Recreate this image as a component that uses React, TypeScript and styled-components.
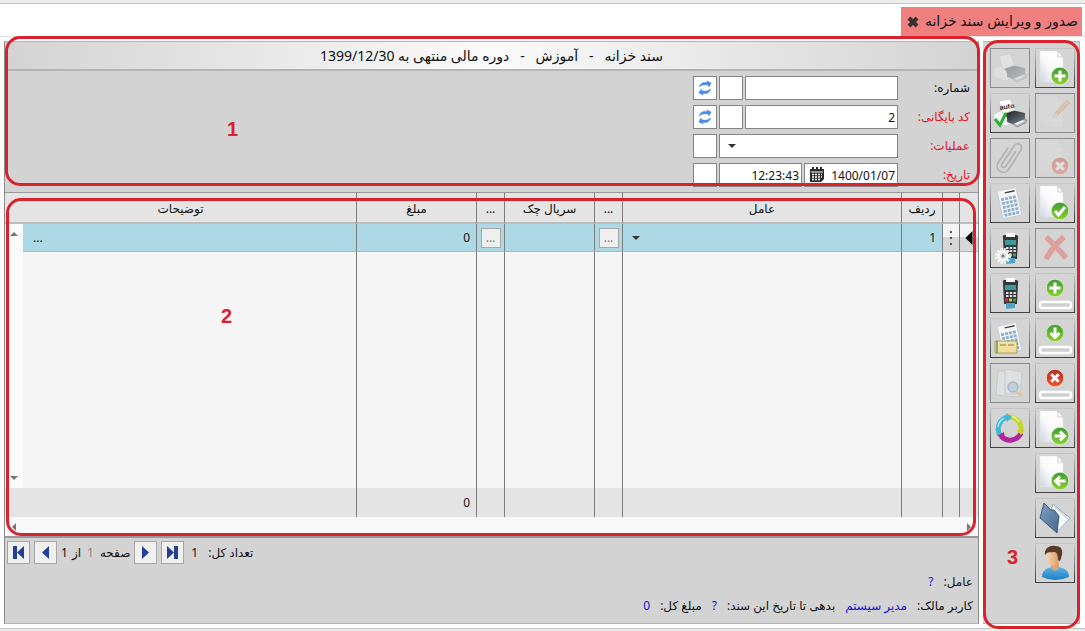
import React from "react";
import styled, { createGlobalStyle, css } from "styled-components";

const Global = createGlobalStyle`
  * { box-sizing: border-box; }
  body {
    margin: 0;
    background: #fff;
    color: #111;
    font: 12px/16px "Noto Sans", "DejaVu Sans", sans-serif;
  }
  button, input { font: inherit; color: inherit; margin: 0; }
`;

const RED = "#d8232c";

/* ---------- page frame ---------- */

const Page = styled.div`
  direction: rtl;
  min-height: 100vh;
  display: flex;
  flex-direction: column;
`;
const Edge = styled.div<{ $bottom?: boolean }>`
  height: ${(p) => (p.$bottom ? 3 : 4)}px;
  background: #ededed;
  ${(p) => (p.$bottom ? "border-top" : "border-bottom")}: 1px solid #c4c4c4;
`;
const TabBar = styled.nav`
  height: 33px;
  padding: 3px 3px 0;
  display: flex;
  border-bottom: 1px solid #ddd;
`;
const Tab = styled.div`
  display: flex;
  align-items: center;
  gap: 6px;
  padding: 0 4px 2px 6px;
  background: #f08080;
  font-size: 14px;
  white-space: nowrap;
`;
const TabClose = styled.button`
  border: 0;
  padding: 3px 0 0;
  background: none;
  display: flex;
`;
const Workspace = styled.div`
  flex: 1;
  display: flex;
  gap: 4px;
  padding: 4px 5px 4px 4px;
`;

/* ---------- highlighted regions ---------- */

const Outline = styled.div<{ $inset: string }>`
  position: absolute;
  inset: ${(p) => p.$inset};
  border: 3px solid ${RED};
  border-radius: 15px;
  pointer-events: none;
  z-index: 2;
`;
const Mark = styled.span<{ $x: string; $y: string }>`
  position: absolute;
  left: ${(p) => p.$x};
  top: ${(p) => p.$y};
  color: ${RED};
  font: bold 20px/24px "Liberation Sans", sans-serif;
`;

/* ---------- tool sidebar ---------- */

const Sidebar = styled.aside`
  position: relative;
  flex: none;
  display: flex;
  align-items: flex-start;
  gap: 5px;
  padding: 6px 4px 6px 7px;
  background: #d3d3d3;
  border: solid #b5b5b5;
  border-width: 1px 1px 1px 0;
`;
const ToolColumn = styled.div`
  display: flex;
  flex-direction: column;
  gap: 5px;
`;
const Tool = styled.button`
  width: 40px;
  height: 40px;
  padding: 0;
  background: #d4d4d4;
  border: 1px solid;
  border-image: linear-gradient(#c6c6c6, #404040) 1;
  svg { display: block; }
  &:disabled {
    border-image: none;
    border-color: #8c8c8c;
  }
  &:disabled svg { opacity: 0.32; }
`;

/* ---------- document panel ---------- */

const Panel = styled.main`
  flex: 1;
  min-width: 0;
  display: flex;
  flex-direction: column;
  background: #d3d3d3;
  border: 1px solid #8a8a8a;
  border-top-color: #b5b5b5;
  border-bottom-color: #b5b5b5;
`;
const Head = styled.section`
  position: relative;
  height: 150px;
`;
const Title = styled.h1`
  margin: 0;
  height: 29px;
  border-bottom: 2px solid #b4b4b4;
  background: linear-gradient(to right, #d3d3d3, #fafafa 50%, #d3d3d3);
  font-size: 14px;
  font-weight: normal;
  line-height: 28px;
  text-align: center;
  white-space: pre;
`;
const Form = styled.form`
  display: flex;
  flex-direction: column;
  gap: 5px;
  padding: 5px 8px 0;
`;
const FormRow = styled.div`
  display: flex;
  gap: 2px;
  height: 24px;
`;
const Label = styled.label<{ $required?: boolean }>`
  width: 70px;
  line-height: 24px;
  white-space: nowrap;
  color: ${(p) => (p.$required ? "#e8101c" : "#111")};
`;
const boxed = css`
  background: #fff;
  border: 1px solid #858585;
`;
const Field = styled.div<{ $w: number }>`
  ${boxed}
  width: ${(p) => p.$w}px;
  display: flex;
  align-items: center;
  padding: 0 2px 0 4px;
`;
const Input = styled.input`
  flex: 1;
  min-width: 0;
  height: 100%;
  padding: 0;
  border: 0;
  outline: 0;
  background: none;
  direction: ltr;
  text-align: right;
`;
const Small = styled.input`
  ${boxed}
  width: 24px;
  padding: 0;
`;
const BoxButton = styled.button`
  ${boxed}
  width: 24px;
  padding: 0;
  display: grid;
  place-items: center;
`;
const Plain = styled.button`
  border: 0;
  padding: 0;
  background: none;
  display: flex;
`;
const DropButton = styled(Plain)`
  padding: 0 4px;
`;
const CellDrop = styled(Plain)`
  padding: 0 10px;
`;

/* ---------- grid ---------- */

const GridWrap = styled.section`
  position: relative;
  border-top: 1px solid #999;
  border-bottom: 2px solid #999;
`;
const Table = styled.table`
  width: 100%;
  table-layout: fixed;
  border-collapse: separate;
  border-spacing: 0;
  background: #f5f5f5;
  th, td { padding: 0; font-weight: normal; border-left: 1px solid #7c7c7c; }
  th:last-child, td.wide, td.bar { border-left: 0; }
  th { height: 31px; padding-top: 2px; background: #e4e4e4; border-bottom: 2px solid #bdbdbd; }
`;
const CurrentRow = styled.tr`
  height: 28px;
  td { background: #add8e6; border-bottom: 1px solid #b4b4b4; }
  td.handle { background: linear-gradient(#f4f4f4 50%, #d6d6d6 50%); }
  td.handle svg { display: block; margin: 0 auto; }
  td.wide { padding-left: 10px; }
  td.bar { background: #fafafa; border-bottom: 0; }
`;
const SpaceRow = styled.tr`
  height: 236px;
`;
const SumRow = styled.tr`
  height: 29px;
  td { background: #e4e4e4; }
`;
const Num = styled.td`
  direction: ltr;
  text-align: right;
  && { padding: 0 5px 0 0; }
`;
const CellButton = styled.button`
  display: block;
  width: 20px;
  height: 20px;
  margin: 0 auto;
  padding: 0;
  border: 1px solid #a8a8a8;
  background: #efefef;
  color: #777;
  line-height: 18px;
`;
const BarTrack = styled.div`
  height: 264px;
  padding: 6px 5px 6px 0;
  display: flex;
  flex-direction: column;
  justify-content: space-between;
`;
const HBar = styled.div`
  height: 19px;
  padding: 0 5px;
  display: flex;
  align-items: center;
  justify-content: space-between;
  background: #f9f9f9;
`;

/* ---------- footer ---------- */

const Pager = styled.div`
  display: flex;
  justify-content: flex-end;
  align-items: center;
  gap: 4px;
  padding: 3px 2px;
  white-space: nowrap;
`;
const PageButton = styled.button`
  width: 23px;
  height: 23px;
  padding: 0;
  border: 1px solid #a8a8a8;
  background: #f0f0f0;
  display: grid;
  place-items: center;
`;
const PagerText = styled.div`
  display: flex;
  gap: 4px;
`;
const Total = styled.div`
  display: flex;
  gap: 10px;
  padding-left: 3px;
`;
const Muted = styled.span`
  color: #888;
  padding: 0 2px;
`;
const Info = styled.dl`
  display: flex;
  gap: 10px;
  margin: 0;
  padding: 0 5px;
  height: 24px;
  line-height: 24px;
  white-space: nowrap;
  dt, dd { margin: 0; }
  dd { color: #1414dc; }
`;
const InfoBlock = styled.div`
  padding-top: 3px;
`;
const HiddenDefs = styled.svg`
  position: absolute;
`;

/* ---------- drawings ---------- */

const Arrow = ({ dir, c = "#777", s = 8 }: { dir: "u" | "d" | "l" | "r"; c?: string; s?: number }) => {
  const d = { u: "M0 6L4 2L8 6Z", d: "M0 2L4 6L8 2Z", l: "M6 0L2 4L6 8Z", r: "M2 0L6 4L2 8Z" }[dir];
  return <svg width={s} height={s} viewBox="0 0 8 8"><path d={d} fill={c} /></svg>;
};

const Refresh = () => (
  <svg width="14" height="16" viewBox="0 0 14 16" fill="#4a8de6">
    <path d="M1 7.500C1.500 3.500 5 1.500 9 2.500L8.500 .5L13.500 3L11 7.500L10 5.500C7 4.500 4 5 1 7.500Z" />
    <path d="M13 8.500C12.500 12.500 9 14.500 5 13.500L5.500 15.500L.5 13L3 8.500L4 10.500C7 11.500 10 11 13 8.500Z" />
  </svg>
);

const Calendar = () => (
  <svg width="16" height="16" viewBox="0 0 16 16">
    <path d="M1 2H15V12L12 15H1Z" fill="#2a2a2a" />
    <path d="M4 0V3M8 0V3M12 0V3" stroke="#2a2a2a" strokeWidth="2" />
    <path d="M2 5H14" stroke="#fff" />
    <path d="M3 7.500H13M3 10H13M3 12.500H11" stroke="#fff" strokeWidth="1.500" strokeDasharray="2 1" />
  </svg>
);

const Dots = () => (
  <svg width="4" height="16" viewBox="0 0 4 16" fill="#555">
    <path d="M1 1H3V3H1ZM1 7H3V9H1ZM1 13H3V15H1Z" />
  </svg>
);

const PageGlyph = ({ kind }: { kind: "first" | "prev" | "next" | "last" }) => {
  const left = kind === "first" || kind === "prev";
  const bar = kind === "first" || kind === "last";
  return (
    <svg width="15" height="15" viewBox="0 0 15 15" fill="#1f3f99">
      <g transform={left ? undefined : "translate(15 0) scale(-1 1)"}>
        {bar && <path d="M2 1H6V14H2Z" />}
        <path d={bar ? "M13 1V14L6 7.500Z" : "M11 1V14L4 7.500Z"} />
      </g>
    </svg>
  );
};

const Defs = () => (
  <HiddenDefs width="0" height="0" aria-hidden="true">
    <defs>
      <linearGradient id="sheet" x1="1" y1="0" x2="0" y2="1">
        <stop offset="0" stopColor="#fff" /><stop offset=".55" stopColor="#fafafa" /><stop offset="1" stopColor="#cdd6e0" />
      </linearGradient>
      <linearGradient id="green" x1="0" y1="0" x2="0" y2="1">
        <stop offset="0" stopColor="#3d9b35" /><stop offset="1" stopColor="#8ed12c" />
      </linearGradient>
      <linearGradient id="red" x1="0" y1="0" x2="0" y2="1">
        <stop offset="0" stopColor="#b92c1c" /><stop offset="1" stopColor="#ee5238" />
      </linearGradient>
      <linearGradient id="blue" x1="0" y1="0" x2="1" y2="1">
        <stop offset="0" stopColor="#7fa0c4" /><stop offset="1" stopColor="#48698f" />
      </linearGradient>
      <linearGradient id="shirt" x1="0" y1="0" x2="0" y2="1">
        <stop offset="0" stopColor="#5db5e8" /><stop offset="1" stopColor="#1f7cc0" />
      </linearGradient>
      <linearGradient id="skin" x1="0" y1="0" x2="1" y2="0">
        <stop offset="0" stopColor="#f6d0a8" /><stop offset="1" stopColor="#d99a68" />
      </linearGradient>
      <linearGradient id="toner" x1="0" y1="0" x2="1" y2="1">
        <stop offset="0" stopColor="#15181c" /><stop offset="1" stopColor="#7b838c" />
      </linearGradient>
    </defs>
  </HiddenDefs>
);

const Icon = ({ children }: { children: React.ReactNode }) => (
  <svg width="38" height="38" viewBox="1 1 38 38" fill="none">{children}</svg>
);
const Sheet = () => (
  <g>
    <path d="M5 3H23L28 9V34H5Z" fill="url(#sheet)" stroke="#e6e6e6" strokeWidth=".5" />
    <path d="M23 3V9H28Z" fill="#fff" stroke="#bbb" strokeWidth=".7" />
  </g>
);
type Sign = "plus" | "x" | "check" | "right" | "left" | "down";
const Badge = ({ sign, cx = 25, cy = 28 }: { sign: Sign; cx?: number; cy?: number }) => {
  const d = {
    plus: "M0 -5.500V5.500M-5.500 0H5.500",
    x: "M-3.700 -3.700L3.700 3.700M3.700 -3.700L-3.700 3.700",
    check: "M-5 0L-1.500 4L5 -4",
    right: "M-5.500 0H4M0 -4.500L4.500 0L0 4.500",
    left: "M5.500 0H-4M0 -4.500L-4.500 0L0 4.500",
    down: "M0 -5.500V4M-4.500 0L0 4.500L4.500 0",
  }[sign];
  return (
    <g transform={`translate(${cx} ${cy})`}>
      <circle r="8.800" fill={sign === "x" ? "url(#red)" : "url(#green)"} stroke="#e0ecd4" strokeWidth=".8" />
      <path d={d} stroke="#fff" strokeWidth="3" />
    </g>
  );
};
const DocIcon = ({ sign }: { sign: Sign }) => <Icon><Sheet /><Badge sign={sign} /></Icon>;
const RowIcon = ({ sign }: { sign: Sign }) => (
  <Icon>
    <Badge sign={sign} cx={20} cy={15} />
    <rect x="5" y="29" width="31" height="6" rx="2.500" fill="#cfcfcf" stroke="#fff" strokeWidth="2.500" />
  </Icon>
);
const Printer = ({ auto }: { auto?: boolean }) => (
  <Icon>
    <path d="M21 30L33 25L37 27L36 30L27 34Z" fill="#aab0b6" stroke="#81878d" strokeWidth=".6" />
    <path d="M24 30L32 27L35 28L27 32Z" fill="#eef1f4" />
    <path d="M4 21L13 17L18 20L20 31L16 33L4 29Z" fill="#f3f5f7" stroke="#c6cacf" strokeWidth=".6" />
    <path d="M13 20L22 17L35 20L35 26L23 31L17 29Q18 23 13 20Z" fill="url(#toner)" />
    <path d="M9 8L20 6L25 17L13 21Z" fill="#fff" stroke="#c5c5c5" strokeWidth=".7" />
    {auto && (
      <>
        <text x="10" y="17" direction="ltr" fontSize="7" fontWeight="bold" fill="#222" fontFamily="Liberation Sans, sans-serif" transform="rotate(-8 10 17)">auto</text>
        <path d="M5 26L10 32L16 20" stroke="#2eae32" strokeWidth="3" />
      </>
    )}
  </Icon>
);
const CalcBody = () => (
  <g transform="rotate(-12 20 20)">
    <path d="M10 6H29V12H10Z" fill="#fff" />
    <rect x="10" y="6" width="19" height="28" rx="1" fill="#f4f6f8" stroke="#c3c8cf" strokeWidth=".7" />
    <path d="M17 9H27" stroke="#444" strokeWidth="1.500" />
    <path d="M12 15H27M12 19H27M12 23H27M12 27H27M12 31H27" stroke="#8db0cd" strokeWidth="2.800" strokeDasharray="3 1" />
  </g>
);
const Terminal = ({ gear }: { gear?: boolean }) => (
  <Icon>
    <path d="M13 9Q12 7 15 7H26Q29 7 28 10L27 31H14Z" fill="#33373b" />
    <path d="M16 5H25V9H16Z" fill="#fff" />
    <path d="M15 12H26V17H15Z" fill="#3b9a9c" />
    <path d="M16 20H26M16 23H26" stroke="#dedede" strokeWidth="2" strokeDasharray="2.500 1.200" />
    <path d="M15 27H18" stroke="#d33" strokeWidth="3" />
    <path d="M19 27H22" stroke="#e3c52e" strokeWidth="3" />
    <path d="M23 27H26" stroke="#35a846" strokeWidth="3" />
    <path d="M16 30H25V35L16 36Z" fill="#4da3c8" />
    {gear && (
      <g>
        <circle cx="13" cy="28" r="6.500" stroke="#f2f2f2" strokeWidth="3" strokeDasharray="2.200 1.200" />
        <circle cx="13" cy="28" r="4.500" fill="#ddd" stroke="#f8f8f8" strokeWidth="2.500" />
        <circle cx="13" cy="28" r="1.500" fill="#777" />
      </g>
    )}
  </Icon>
);

const rightTools: { name: string; icon: React.ReactNode; off?: boolean }[] = [
  { name: "سند جدید", icon: <DocIcon sign="plus" /> },
  { name: "ویرایش", off: true, icon: (
    <Icon><g opacity=".4"><Sheet /></g><path d="M18 25L20 20L32 7L35 10L23 22Z" fill="#f09a5c" stroke="#b06b40" strokeWidth=".7" /><path d="M18 25L20 20L23 22Z" fill="#f3dcc0" /></Icon>
  ) },
  { name: "حذف سند", off: true, icon: <Icon><g opacity=".4"><Sheet /></g><Badge sign="x" /></Icon> },
  { name: "تایید", icon: <DocIcon sign="check" /> },
  { name: "انصراف", off: true, icon: <Icon><path d="M11 9Q20 17 31 30M29 9Q18 18 11 31" stroke="#f0332c" strokeWidth="5.500" /></Icon> },
  { name: "افزودن ردیف", icon: <RowIcon sign="plus" /> },
  { name: "درج ردیف", icon: <RowIcon sign="down" /> },
  { name: "حذف ردیف", icon: <RowIcon sign="x" /> },
  { name: "سند بعدی", icon: <DocIcon sign="right" /> },
  { name: "سند قبلی", icon: <DocIcon sign="left" /> },
  { name: "دفتر", icon: (
    <Icon>
      <path d="M18 6L35 20L22 34L14 20Z" fill="#f5f8fb" stroke="#8292a4" strokeWidth=".8" />
      <path d="M20 9L33 21M23 34L35 21" stroke="#c4d2e0" strokeWidth="1.500" />
      <path d="M9 5L16 12L19 12L24 18L22 35L5 20Z" fill="url(#blue)" stroke="#33526f" strokeWidth=".9" />
    </Icon>
  ) },
  { name: "کاربر", icon: (
    <Icon>
      <path d="M7 34C7 27 12 25 17 24H23C29 25 34 27 34 34Q20 40 7 34Z" fill="url(#shirt)" />
      <path d="M16 20H24V25Q20 30 16 25Z" fill="#dca274" />
      <ellipse cx="18.500" cy="14" rx="6.500" ry="9" fill="url(#skin)" />
      <path d="M10 12C9 6 14 2 20 3C28 3 29 9 25 18L23 17C23 12 22 9 19 9C15 10 13 8 10 12Z" fill="#5a3a28" />
    </Icon>
  ) },
];

const leftTools: typeof rightTools = [
  { name: "چاپ", off: true, icon: <Printer /> },
  { name: "چاپ خودکار", icon: <Printer auto /> },
  { name: "پیوست", off: true, icon: (
    <Icon><path d="M26 13L16 28C14 31 10 29 12 26L24 8C27 3 34 7 31 12L19 31C15 38 4 33 8 25L18 10" stroke="#666" strokeWidth="1.500" /></Icon>
  ) },
  { name: "ماشین حساب", icon: <Icon><CalcBody /></Icon> },
  { name: "تنظیم کارتخوان", icon: <Terminal gear /> },
  { name: "کارتخوان", icon: <Terminal /> },
  { name: "محاسبه چک", icon: (
    <Icon>
      <CalcBody />
      <path d="M5 23H27V35H5Z" fill="#efe0a2" stroke="#a38d45" strokeWidth=".8" />
      <path d="M7 23V35" stroke="#6a9a55" strokeWidth="1.500" />
      <path d="M10 27H16M18 27H24" stroke="#8f7c48" />
    </Icon>
  ) },
  { name: "جستجو", off: true, icon: (
    <Icon>
      <path d="M8 8H25L29 13V34L6 32Z" fill="#f4f6fa" stroke="#aab4c4" />
      <path d="M15 6L32 9L30 31H15Z" fill="#f4f7ff" stroke="#aab4c4" />
      <circle cx="23" cy="24" r="5" fill="#8fc6f2" stroke="#4f7faf" strokeWidth="1.500" />
      <path d="M26 28L32 33" stroke="#e9a33b" strokeWidth="3" />
    </Icon>
  ) },
  { name: "بازخوانی", icon: (
    <Icon>
      <path d="M10 27A12 12 0 0 1 18 9" stroke="#40b9d6" strokeWidth="5" />
      <path d="M18 9A12 12 0 0 1 31 23" stroke="#c5d62b" strokeWidth="5" />
      <path d="M31 25A12 12 0 0 1 11 28" stroke="#b3259a" strokeWidth="5" />
      <path d="M16 5L22 9L17 14Z" fill="#40b9d6" />
      <path d="M26 22H35L31 27Z" fill="#c5d62b" />
      <path d="M7 28L14 24L15 31Z" fill="#b3259a" />
      <path d="M8 19A12 12 0 0 1 14 10" stroke="#a5e2ee" strokeWidth="1.500" />
      <path d="M22 8A12 12 0 0 1 29 14" stroke="#e9f193" strokeWidth="1.500" />
    </Icon>
  ) },
];

const columnWidths = [19, 17, 41, 279, 28, 90, 28, 120];

const Tools = ({ items }: { items: typeof rightTools }) => (
  <ToolColumn>
    {items.map((t) => (
      <Tool key={t.name} type="button" aria-label={t.name} disabled={t.off}>{t.icon}</Tool>
    ))}
  </ToolColumn>
);

export default function App() {
  return (
    <Page>
      <Global />
      <Defs />
      <Edge />
      <TabBar>
        <Tab>
          صدور و ویرایش سند خزانه
          <TabClose type="button" aria-label="بستن">
            <svg width="12" height="12" viewBox="0 0 12 12"><path d="M2 2L10 10M10 2L2 10" stroke="#333" strokeWidth="4" /></svg>
          </TabClose>
        </Tab>
      </TabBar>
      <Workspace>
        <Sidebar>
          <Tools items={rightTools} />
          <Tools items={leftTools} />
          <Outline $inset="-2px -1px -6px 0" />
          <Mark $x="24px" $y="503px">3</Mark>
        </Sidebar>
        <Panel>
          <Head>
            <Title>{"سند خزانه   -   آموزش   -   دوره مالی منتهی به 1399/12/30"}</Title>
            <Form>
              <FormRow>
                <Label htmlFor="no">شماره:</Label>
                <Field $w={153}><Input id="no" /></Field>
                <Small aria-label="شماره" />
                <BoxButton type="button" aria-label="تازه سازی شماره"><Refresh /></BoxButton>
              </FormRow>
              <FormRow>
                <Label $required htmlFor="code">کد بایگانی:</Label>
                <Field $w={153}><Input id="code" defaultValue="2" /></Field>
                <Small aria-label="کد" />
                <BoxButton type="button" aria-label="تازه سازی کد"><Refresh /></BoxButton>
              </FormRow>
              <FormRow>
                <Label $required htmlFor="op">عملیات:</Label>
                <Field $w={179}>
                  <Input id="op" />
                  <DropButton type="button" aria-label="باز کردن"><Arrow dir="d" c="#333" /></DropButton>
                </Field>
                <Small aria-label="عملیات" />
              </FormRow>
              <FormRow>
                <Label $required htmlFor="date">تاریخ:</Label>
                <Field $w={94}>
                  <Input id="date" defaultValue="1400/01/07" />
                  <Plain type="button" aria-label="تقویم"><Calendar /></Plain>
                </Field>
                <Field $w={83}><Input aria-label="ساعت" defaultValue="12:23:43" /></Field>
                <Small aria-label="تاریخ" />
              </FormRow>
            </Form>
            <Outline $inset="-6px -2px 6px 0" />
            <Mark $x="222px" $y="75px">1</Mark>
          </Head>
          <GridWrap>
            <Table>
              <colgroup>
                {columnWidths.map((w, i) => <col key={i} width={w} />)}
                <col />
                <col width={18} />
              </colgroup>
              <thead>
                <tr>
                  <th /><th /><th>ردیف</th><th>عامل</th><th>...</th><th>سریال چک</th><th>...</th><th>مبلغ</th>
                  <th colSpan={2}>توضیحات</th>
                </tr>
              </thead>
              <tbody>
                <CurrentRow>
                  <td className="handle"><Arrow dir="l" c="#000" s={14} /></td>
                  <td className="handle"><Dots /></td>
                  <Num>1</Num>
                  <td dir="ltr"><CellDrop type="button" aria-label="انتخاب عامل"><Arrow dir="d" c="#333" /></CellDrop></td>
                  <td><CellButton type="button">...</CellButton></td>
                  <td />
                  <td><CellButton type="button">...</CellButton></td>
                  <Num>0</Num>
                  <td className="wide" dir="ltr">...</td>
                  <td className="bar" rowSpan={2}>
                    <BarTrack><Arrow dir="u" /><Arrow dir="d" /></BarTrack>
                  </td>
                </CurrentRow>
                <SpaceRow>
                  <td /><td /><td /><td /><td /><td /><td /><td /><td className="wide" />
                </SpaceRow>
              </tbody>
              <tfoot>
                <SumRow>
                  <td /><td /><td /><td /><td /><td /><td /><Num>0</Num><td className="wide" colSpan={2} />
                </SumRow>
              </tfoot>
            </Table>
            <HBar><Arrow dir="r" /><Arrow dir="l" /></HBar>
            <Outline $inset="5px 2px 0 1px" />
            <Mark $x="216px" $y="111px">2</Mark>
          </GridWrap>
          <Pager>
            <Total><span>تعداد کل:</span><span>1</span></Total>
            <PageButton type="button" aria-label="آخر"><PageGlyph kind="last" /></PageButton>
            <PageButton type="button" aria-label="بعد"><PageGlyph kind="next" /></PageButton>
            <PagerText><span>صفحه</span><Muted>1</Muted><span>از</span><span>1</span></PagerText>
            <PageButton type="button" aria-label="قبل"><PageGlyph kind="prev" /></PageButton>
            <PageButton type="button" aria-label="اول"><PageGlyph kind="first" /></PageButton>
          </Pager>
          <InfoBlock>
            <Info><dt>عامل:</dt><dd>?</dd></Info>
            <Info>
              <dt>کاربر مالک:</dt><dd>مدیر سیستم</dd>
              <dt>بدهی تا تاریخ این سند:</dt><dd>?</dd>
              <dt>مبلغ کل:</dt><dd>0</dd>
            </Info>
          </InfoBlock>
        </Panel>
      </Workspace>
      <Edge $bottom />
    </Page>
  );
}
